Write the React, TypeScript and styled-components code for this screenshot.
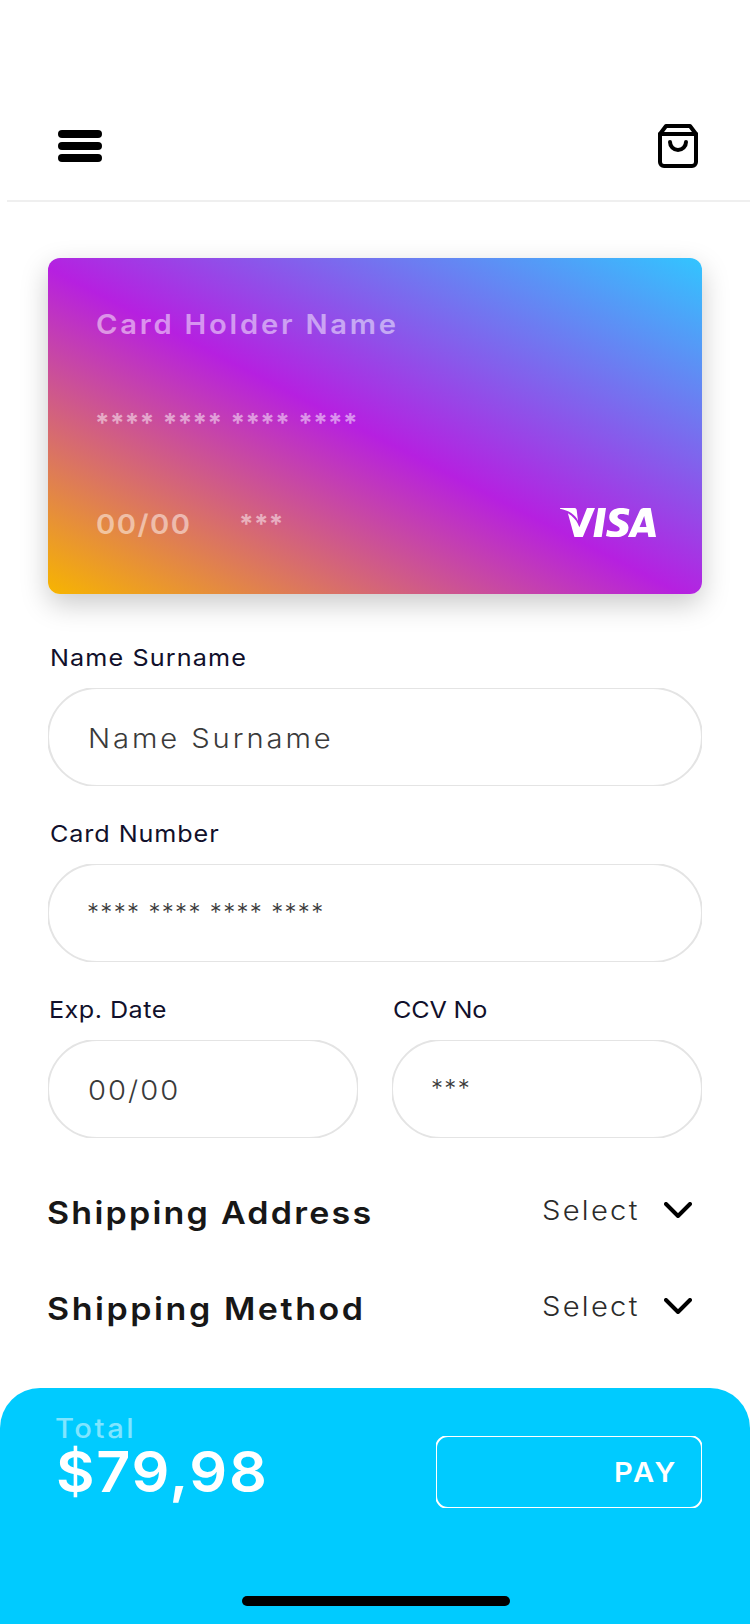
import React from 'react';
import styled, { createGlobalStyle } from 'styled-components';

const GlobalStyle = createGlobalStyle`
  *, *::before, *::after { box-sizing: border-box; }
  body { margin: 0; background: #fff; font-family: Inter, "Liberation Sans", sans-serif; }
`;

const Screen = styled.div`
  width: 750px;
  height: 1624px;
  overflow: hidden;
  display: flex;
  flex-direction: column;
  background: #fff;
`;

const TopBar = styled.header`
  height: 200px;
  padding: 92px 52px 0 58px;
  display: flex;
  align-items: center;
  justify-content: space-between;
`;

const MenuButton = styled.div`
  display: flex;
  flex-direction: column;
  gap: 4px;
`;

const MenuBar = styled.span`
  width: 44px;
  height: 8px;
  border-radius: 4px;
  background: #000;
`;

const Rule = styled.div`
  height: 2px;
  margin-left: 7px;
  background: #efefef;
`;

const Content = styled.main`
  padding: 56px 48px 0;
`;

interface TextProps {
  $size: number;
  $weight: number;
  $tracking: number;
  $stretch?: number;
  $wordGap?: number;
}

const Text = styled.span<TextProps>`
  display: inline-block;
  white-space: pre;
  vertical-align: top;
  font-size: ${(p) => p.$size}px;
  font-weight: ${(p) => p.$weight};
  letter-spacing: ${(p) => p.$tracking}px;
  word-spacing: ${(p) => p.$wordGap ?? 0}px;
  transform: scaleX(${(p) => p.$stretch ?? 1.08});
  transform-origin: left center;
`;

const CreditCard = styled.section`
  height: 336px;
  padding: 48px 46px 0 48px;
  border-radius: 12px;
  background: linear-gradient(to top right, #f7b500 0%, #b620e0 48.5%, #32c5ff 100%);
  box-shadow: 0 10px 28px rgba(0, 0, 0, 0.21);
  color: rgba(255, 255, 255, 0.5);
  line-height: 34px;
`;

const CardHolder = styled.div`
  height: 38px;
  line-height: 38px;
`;

const CardDigits = styled.div`
  height: 34px;
  margin: 62px 0 67px -1px;
`;

const CardFooter = styled.div`
  display: grid;
  grid-template-columns: 143px 1fr auto;
  height: 34px;
`;

const Expiry = styled.div`
  line-height: 36px;
`;

const BrandMark = styled.svg`
  align-self: end;
  margin-bottom: 6px;
  display: block;
`;

const Form = styled.form`
  display: grid;
  grid-template-columns: 310px 310px;
  column-gap: 34px;
  row-gap: 32px;
  margin-top: 48px;
`;

const Field = styled.div<{ $wide?: boolean }>`
  grid-column: ${(p) => (p.$wide ? '1 / -1' : 'auto')};
  display: flex;
  flex-direction: column;
  gap: 14px;
`;

const Label = styled.label<{ $indent: number }>`
  height: 32px;
  line-height: 32px;
  padding-left: ${(p) => p.$indent}px;
  color: #11102b;
`;

const Pill = styled.div<{ $masked?: boolean }>`
  position: relative;
  height: 98px;
  line-height: ${(p) => (p.$masked ? 98 : 101)}px;
  padding-left: ${(p) => (p.$masked ? 39 : 40)}px;
  overflow: hidden;
  color: #3a3a3a;

  &::after {
    content: '';
    position: absolute;
    inset: -1px;
    border: 2px solid #e4e4e4;
    border-radius: 50px;
  }
`;

const Options = styled.div`
  display: flex;
  flex-direction: column;
  gap: 55px;
  margin: 54px 0 0 -1px;
`;

const OptionRow = styled.div`
  display: flex;
  justify-content: space-between;
  align-items: flex-start;
  height: 41px;
  line-height: 41px;
  color: #171717;
`;

const Picker = styled.div`
  display: grid;
  grid-template-columns: 122px 28px;
  padding-right: 10px;
  line-height: 38px;
  color: #2b2b2b;
`;

const Chevron = styled.svg`
  display: block;
  margin-top: 10px;
`;

const Checkout = styled.footer`
  height: 236px;
  margin-top: 59px;
  border-radius: 40px 40px 0 0;
  background: #00cbff;
  color: #fff;
`;

const CheckoutRow = styled.div`
  display: flex;
  justify-content: space-between;
  align-items: flex-start;
  height: 120px;
  padding: 25px 48px 0 55px;
`;

const Totals = styled.div`
  display: flex;
  flex-direction: column;
`;

const TotalLabel = styled.div`
  height: 30px;
  line-height: 32px;
  color: rgba(255, 255, 255, 0.5);
`;

const Price = styled.div`
  height: 58px;
  padding-left: 1px;
  line-height: 58px;
`;

const PayButton = styled.div`
  position: relative;
  width: 266px;
  height: 72px;
  margin-top: 23px;
  padding-left: 178px;
  line-height: 73px;
  overflow: hidden;

  &::after {
    content: '';
    position: absolute;
    inset: -1px;
    border: 2px solid #fff;
    border-radius: 13px;
  }
`;

const HomeIndicator = styled.div`
  width: 268px;
  height: 10px;
  margin: 88px 0 0 242px;
  border-radius: 5px;
  background: #000;
`;

const BagIcon = () => (
  <svg width="40" height="44" viewBox="0 0 40 44" fill="none" stroke="#000" strokeWidth="4" strokeLinejoin="round" strokeLinecap="round">
    <path d="M8 2 2 10v28a4 4 0 0 0 4 4h28a4 4 0 0 0 4-4V10L32 2Z" />
    <path d="M2 10h36" />
    <path d="M12 18a8 8 0 0 0 16 0" />
  </svg>
);

const VisaLogo = () => (
  <BrandMark width="96" height="29" viewBox="0 0 96 29" fill="#fff">
    <path d="M0 0H14.6C15.9 0 16.4.8 16.7 2L18 13C15.4 6.500 8.500 2.300 0 .8Z" />
    <path d="M7.900 5.200C12.500 8 16.200 12 17.700 15.400L19.400 19.200 27 0H35L22.800 29H14.400Z" />
    <path d="M38.300 0H46L41.700 29H33.400Z" />
    <path d="M69.400 1.300 68.500 7.400C65 6 58.200 4.900 57.500 8.400C57 12.300 68.600 12 68.500 19.400C68.400 30 54.500 30.600 46 28L47.200 21.700C51.500 23.700 59.300 24.600 59.700 20.900C60 17.200 49 16.500 49.200 9.300C49.500-.6 61.500-1.500 69.400 1.300Z" />
    <path fillRule="evenodd" d="M85 0H90.700L96 29H88.400L87.700 24.400H77.400L75.400 29H67.900L79.700 2.700C80.600.7 82.200 0 85 0ZM84.200 8 79.600 18.900H86.500Z" />
  </BrandMark>
);

interface FieldData {
  label: string;
  value: string;
  indent: number;
  wide?: boolean;
  masked?: boolean;
  labelTracking: number;
  valueTracking: number;
}

const fields: FieldData[] = [
  { label: 'Name Surname', value: 'Name Surname', indent: 1.5, wide: true, labelTracking: 1.04, valueTracking: 2.7 },
  { label: 'Card Number', value: '**** **** **** ****', indent: 1.5, wide: true, masked: true, labelTracking: 0.85, valueTracking: 1.32 },
  { label: 'Exp. Date', value: '00/00', indent: 1, labelTracking: 0.44, valueTracking: 1.85 },
  { label: 'CCV No', value: '***', indent: 0.5, masked: true, labelTracking: -0.15, valueTracking: 1.32 },
];

const options = [
  { label: 'Shipping Address', tracking: 2.06 },
  { label: 'Shipping Method', tracking: 2.37 },
];

export default function App() {
  return (
    <>
      <GlobalStyle />
      <Screen>
        <TopBar>
          <MenuButton>
            <MenuBar />
            <MenuBar />
            <MenuBar />
          </MenuButton>
          <BagIcon />
        </TopBar>
        <Rule />
        <Content>
          <CreditCard>
            <CardHolder>
              <Text $size={27} $weight={600} $tracking={2.56}>Card Holder Name</Text>
            </CardHolder>
            <CardDigits>
              <Text $size={26} $weight={700} $tracking={0.37} $wordGap={1.6} $stretch={1}>**** **** **** ****</Text>
            </CardDigits>
            <CardFooter>
              <Expiry>
                <Text $size={27} $weight={600} $tracking={1.38}>00/00</Text>
              </Expiry>
              <Text $size={26} $weight={700} $tracking={0.37} $stretch={1}>***</Text>
              <VisaLogo />
            </CardFooter>
          </CreditCard>
          <Form>
            {fields.map((f) => (
              <Field key={f.label} $wide={f.wide}>
                <Label $indent={f.indent}>
                  <Text $size={23.3} $weight={400} $tracking={f.labelTracking}>{f.label}</Text>
                </Label>
                <Pill $masked={f.masked}>
                  <Text
                    $size={f.masked ? 24 : 27}
                    $weight={300}
                    $tracking={f.valueTracking}
                    $stretch={f.masked ? 1 : 1.08}
                  >
                    {f.value}
                  </Text>
                </Pill>
              </Field>
            ))}
          </Form>
          <Options>
            {options.map((o) => (
              <OptionRow key={o.label}>
                <Text $size={31.5} $weight={600} $tracking={o.tracking}>{o.label}</Text>
                <Picker>
                  <Text $size={27} $weight={300} $tracking={2.1}>Select</Text>
                  <Chevron width="28" height="16" viewBox="0 0 28 16" fill="none" stroke="#000" strokeWidth="4" strokeLinecap="round" strokeLinejoin="round">
                    <path d="M2 2 14 14 26 2" />
                  </Chevron>
                </Picker>
              </OptionRow>
            ))}
          </Options>
        </Content>
        <Checkout>
          <CheckoutRow>
            <Totals>
              <TotalLabel>
                <Text $size={27} $weight={500} $tracking={2.4}>Total</Text>
              </TotalLabel>
              <Price>
                <Text $size={57} $weight={600} $tracking={1.6} $stretch={1.04}>$79,98</Text>
              </Price>
            </Totals>
            <PayButton>
              <Text $size={27} $weight={600} $tracking={2.3}>PAY</Text>
            </PayButton>
          </CheckoutRow>
          <HomeIndicator />
        </Checkout>
      </Screen>
    </>
  );
}
